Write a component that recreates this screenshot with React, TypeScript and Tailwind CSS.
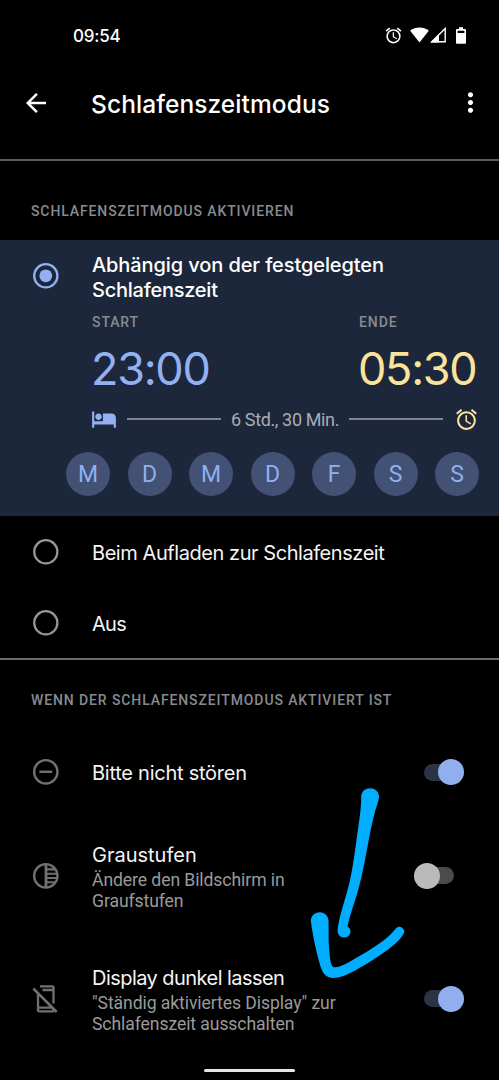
import { useState } from "react";
import type { ReactNode } from "react";
import { MdAlarm, MdArrowBack, MdHotel, MdMoreVert } from "react-icons/md";

const DAYS = ["M", "D", "M", "D", "F", "S", "S"];

function StatusBar() {
  return (
    <div className="flex h-[70px] items-center justify-between pl-[73px] pr-[33px] pt-[2px] text-white">
      <span className="pt-[2px] font-['Inter'] text-[17px] font-medium tracking-[-0.2px]">09:54</span>
      <div className="flex items-center pb-[2px]">
        <MdAlarm className="mr-[7px] size-[19px]" />
        <svg width="19" height="16" viewBox="0 0 19 16" className="mr-[1px]">
          <path d="M0.2 3.8C5.4-.5 13.6-.5 18.8 3.8L9.5 15.4z" fill="currentColor" />
        </svg>
        <svg width="17" height="16" viewBox="0 0 17 16" className="mr-[9px]">
          <path d="M1.8 14.8L15.2 1.5V14.8z" fill="none" stroke="currentColor" strokeWidth="1.4" />
          <path d="M0.5 15.4L9 7V15.4z" fill="currentColor" />
        </svg>
        <svg width="10" height="17" viewBox="0 0 10 17">
          <path
            fillRule="evenodd"
            d="M3 .3h4v1.6h2q1 0 1 1V16q0 .8-1 .8H1q-1 0-1-.8V2.9q0-1 1-1h2zM1.6 3.7v2.3h6.8V3.7z"
            fill="currentColor"
          />
        </svg>
      </div>
    </div>
  );
}

function SectionLabel({ children }: { children: ReactNode }) {
  return (
    <h2 className="pl-[31px] text-[14px] font-medium leading-5 tracking-[0.89px] whitespace-nowrap text-[#878b91]">
      {children}
    </h2>
  );
}

function Radio({ checked }: { checked: boolean }) {
  return (
    <svg
      width="26"
      height="26"
      viewBox="0 0 26 26"
      className={`shrink-0 ${checked ? "text-[#91b1f3]" : "text-[#92979d]"}`}
    >
      <circle cx="12.8" cy="12.8" r="11.6" fill="none" stroke="currentColor" strokeWidth="2.3" />
      {checked && <circle cx="12.8" cy="12.8" r="6.4" fill="currentColor" />}
    </svg>
  );
}

function Toggle({ on, onClick }: { on: boolean; onClick: () => void }) {
  return (
    <button
      role="switch"
      aria-checked={on}
      onClick={onClick}
      className={`flex h-[26px] w-[50px] shrink-0 items-center ${on ? "justify-end" : "justify-start"}`}
    >
      <span
        className={`flex h-[17px] w-[40px] items-center rounded-full ${
          on ? "justify-end bg-[#2b3447]" : "justify-start bg-[#4b4b4b]"
        }`}
      >
        <span
          className={`size-[26px] shrink-0 rounded-full ${on ? "bg-[#91aeee]" : "bg-[#bababa]"}`}
        />
      </span>
    </button>
  );
}

function DndIcon() {
  return (
    <svg width="28" height="28" viewBox="0 0 28 28" fill="none" stroke="#707070" strokeWidth="2.4">
      <circle cx="13.8" cy="13.8" r="11.7" />
      <path d="M7.4 13.8h12.8" />
    </svg>
  );
}

function GrayscaleIcon() {
  return (
    <svg width="28" height="28" viewBox="0 0 28 28" fill="none" stroke="#707070" strokeWidth="2.4">
      <circle cx="13.8" cy="13.8" r="11.7" />
      <path d="M14 2.3v23" strokeWidth="2.8" />
      <path d="M14 7.4h8.5M14 11.7h11M14 16h11M14 20.3h8.5" strokeWidth="2.1" />
    </svg>
  );
}

function DisplayOffIcon() {
  return (
    <svg width="28" height="30" viewBox="0 0 28 30" fill="none" stroke="#707070" strokeWidth="2.3">
      <path d="M6 9.5V26.2q0 1.1 1.1 1.1H20.5q1 0 1-1.1v-2" />
      <path d="M8 2.3H20.5q1 0 1 1V19.5M10.5 6h11M6 23.7h13.5" />
      <path d="M1.3 4.5L24.7 28" strokeWidth="2.5" />
    </svg>
  );
}

function TimeBlock({ label, time, className }: { label: string; time: string; className: string }) {
  return (
    <div className="w-[118px]">
      <div className="text-[14px] font-medium leading-5 tracking-[0.9px] text-[#878b91]">{label}</div>
      <div
        className={`-ml-px mt-[8px] font-['Inter'] text-[45px] leading-[58px] whitespace-nowrap tracking-[-1.3px] ${className}`}
      >
        {time}
      </div>
    </div>
  );
}

type SettingProps = {
  icon: ReactNode;
  title: string;
  lines?: string[];
  on: boolean;
  onToggle: () => void;
  className: string;
  titleClass: string;
};

function SettingRow({ icon, title, lines, on, onToggle, className, titleClass }: SettingProps) {
  return (
    <div className={`flex items-center pr-[35px] ${className}`}>
      <div className="flex w-[92px] shrink-0 justify-center pr-px">{icon}</div>
      <div className="flex-1">
        <div className={`font-['Inter'] text-[20px] whitespace-nowrap text-[#f4f4f4] ${titleClass}`}>
          {title}
        </div>
        {lines?.map((line) => (
          <div
            key={line}
            className="text-[17.6px] leading-[20.6px] tracking-[-0.09px] whitespace-nowrap text-[#9a9a9a]"
          >
            {line}
          </div>
        ))}
      </div>
      <Toggle on={on} onClick={onToggle} />
    </div>
  );
}

// Hand-drawn marker arrow on top of the settings list
function MarkerArrow() {
  return (
    <svg
      className="pointer-events-none absolute left-[300px] top-[780px]"
      width="110"
      height="205"
      viewBox="300 780 110 205"
      fill="#00adff"
    >
      <path d="M361.2 797.5C361 792 365 788.3 370 788.3C375.5 788.3 379.3 792.5 379 797C378.5 802 376.5 806.5 375 811.5C372 823 369.5 835 367.5 846.7C364.5 862 361.5 879 357.3 893C353.5 906 349.5 916 347.6 926.5C353 929.8 350.5 937.5 344 937.5C339.5 937.5 337 934 337.7 928C339.5 916 343.5 905 346.7 893C351 879 353.5 862 356.5 840C358.5 825 361.2 810 361.2 797.5Z" />
      <path d="M310.9 921.5C310.5 916.5 314.5 912.3 319.7 912.3C325 912.3 328.6 916.5 328.6 921.5C328.7 932 328.3 941 329.3 950C330 958 330.5 967.6 334.5 967.3C341 967.3 349 962 360 955.7C369 950.5 376 946 383.3 940.7C389 936.5 392.5 932.5 396.3 928C400 924.7 405.3 929 404.1 932.7C401.5 938 397.5 941.8 393 945.5C386.5 951 378 956.8 370 961.7C363.5 965.5 357 969.8 350 973C344.5 975.7 339.5 978 333.5 978C325.5 978 322.5 972.5 320.7 967C317 955 313 937 310.9 921.5Z" />
    </svg>
  );
}

export default function App() {
  const [mode, setMode] = useState(0);
  const [dnd, setDnd] = useState(true);
  const [gray, setGray] = useState(false);
  const [dark, setDark] = useState(true);

  return (
    <div className="relative flex h-[1080px] w-[499px] flex-col overflow-hidden bg-black font-['Roboto',sans-serif]">
      <StatusBar />

      <header className="flex h-[89px] items-start pl-[21px] pr-[13px] pt-[18px] text-white">
        <MdArrowBack className="size-[30px]" />
        <h1 className="ml-[40px] flex-1 font-['Inter'] text-[24.5px] font-medium leading-[32px] tracking-[0.08px] whitespace-nowrap">
          Schlafenszeitmodus
        </h1>
        <MdMoreVert className="-mt-px size-[31px]" />
      </header>
      <div className="h-[2px] shrink-0 bg-[#5d5d5d]" />

      <div className="h-[79px] shrink-0 pt-[40px]">
        <SectionLabel>SCHLAFENSZEITMODUS AKTIVIEREN</SectionLabel>
      </div>

      <section className="h-[276px] shrink-0 bg-[#1d273b]">
        <button onClick={() => setMode(0)} className="flex pt-[13px] text-left">
          <span className="flex w-[92px] justify-center pr-px pt-[10px]">
            <Radio checked={mode === 0} />
          </span>
          <span className="font-['Inter'] text-[20px] font-medium leading-[25px] tracking-[-0.1px] whitespace-nowrap text-white">
            Abhängig von der festgelegten
            <br />
            <span className="tracking-[-0.25px]">Schlafenszeit</span>
          </span>
        </button>

        <div className="mt-[9px] flex justify-between pl-[92px] pr-[22px]">
          <TimeBlock label="START" time="23:00" className="text-[#91b1f3]" />
          <TimeBlock label="ENDE" time="05:30" className="text-[#fbe39b]" />
        </div>

        <div className="mt-[8px] flex h-[26px] items-center pl-[91px] pr-[20px]">
          <MdHotel className="size-[26px] text-[#91b1f3]" />
          <span className="ml-[10px] h-[2px] flex-1 bg-[#7f8490]" />
          <span className="mx-[10px] pt-px text-[18px] leading-6 tracking-[-0.36px] whitespace-nowrap text-[#a9adb3]">
            6 Std., 30 Min.
          </span>
          <span className="mr-[11px] h-[2px] flex-1 bg-[#7f8490]" />
          <MdAlarm className="size-[25px] text-[#fbe39b]" />
        </div>

        <div className="mt-[20px] flex justify-between pl-[66px] pr-[20px]">
          {DAYS.map((day, i) => (
            <span
              key={i}
              className="flex size-[44px] items-center justify-center rounded-full bg-[#425174] pt-[2px] text-[23px] text-[#8fb0f2]"
            >
              {day}
            </span>
          ))}
        </div>
      </section>

      <button onClick={() => setMode(1)} className="flex h-[71px] shrink-0 items-center text-left">
        <span className="flex w-[92px] justify-center pr-px">
          <Radio checked={mode === 1} />
        </span>
        <span className="pt-[3px] font-['Inter'] text-[20px] tracking-[-0.44px] whitespace-nowrap text-[#f4f4f4]">
          Beim Aufladen zur Schlafenszeit
        </span>
      </button>
      <button onClick={() => setMode(2)} className="flex h-[71px] shrink-0 items-center text-left">
        <span className="flex w-[92px] justify-center pr-px">
          <Radio checked={mode === 2} />
        </span>
        <span className="pt-[3px] font-['Inter'] text-[20px] tracking-[-0.7px] text-[#f4f4f4]">Aus</span>
      </button>
      <div className="h-[2px] shrink-0 bg-[#6a6a6a]" />

      <div className="h-[70px] shrink-0 pt-[30px]">
        <SectionLabel>WENN DER SCHLAFENSZEITMODUS AKTIVIERT IST</SectionLabel>
      </div>

      <SettingRow
        icon={<DndIcon />}
        title="Bitte nicht stören"
        on={dnd}
        onToggle={() => setDnd(!dnd)}
        className="h-[84px]"
        titleClass="pt-px leading-[26px] tracking-[-0.25px]"
      />
      <SettingRow
        icon={<GrayscaleIcon />}
        title="Graustufen"
        lines={["Ändere den Bildschirm in", "Graufstufen"]}
        on={gray}
        onToggle={() => setGray(!gray)}
        className="h-[123px]"
        titleClass="pt-[2px] pb-[2px] leading-[26px] tracking-normal"
      />
      <SettingRow
        icon={<DisplayOffIcon />}
        title="Display dunkel lassen"
        lines={['"Ständig aktiviertes Display" zur', "Schlafenszeit ausschalten"]}
        on={dark}
        onToggle={() => setDark(!dark)}
        className="h-[123px]"
        titleClass="pt-[2px] pb-[2px] leading-[26px] tracking-[-0.55px]"
      />

      <div className="mx-auto mt-[9px] h-[3px] w-[91px] shrink-0 rounded-full bg-[#e6e6e6]" />

      <MarkerArrow />
    </div>
  );
}
